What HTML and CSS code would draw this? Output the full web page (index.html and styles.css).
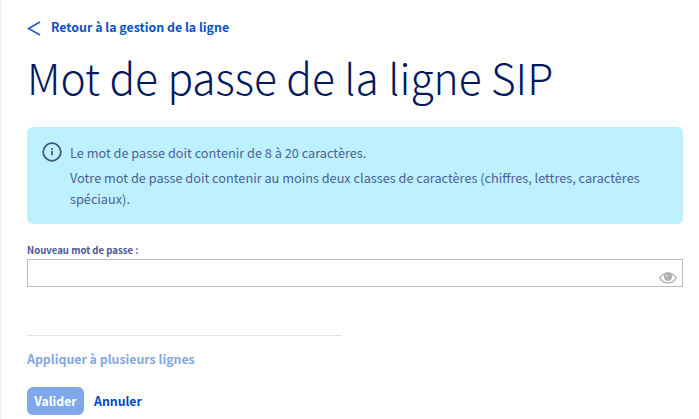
FILE: index.html
```html
<!DOCTYPE html>
<html lang="fr">
<head>
<meta charset="utf-8">
<title>Mot de passe de la ligne SIP</title>
<link rel="stylesheet" href="styles.css">
</head>
<body>
<main class="page">
  <a class="back" href="#">
    <svg class="back-icon" viewBox="0 0 14 15" aria-hidden="true"><path d="M13 1 1.5 7.5 13 14"/></svg>
    <span>Retour à la gestion de la ligne</span>
  </a>
  <h1 class="title"><span>Mot de passe de la ligne SIP</span></h1>
  <section class="notice">
    <svg class="notice-icon" viewBox="0 0 20 20" aria-hidden="true"><circle cx="10" cy="10" r="8.8"/><path d="M10 9v4.3M10 6.2v1.7"/></svg>
    <div class="notice-text">
      <p><span>Le mot de passe doit contenir de 8 à 20 caractères.</span></p>
      <p><span>Votre mot de passe doit contenir au moins deux classes de caractères (chiffres, lettres, caractères spéciaux).</span></p>
    </div>
  </section>
  <label class="label" for="password"><span>Nouveau mot de passe :</span></label>
  <div class="field">
    <input class="input" id="password" type="password">
    <svg class="eye" viewBox="0 0 18 12" aria-hidden="true"><path class="eye-line" d="M.8 6Q4 1 9 1t8.2 5Q14 11 9 11T.8 6Z"/><circle class="eye-ball" cx="9" cy="4.7" r="4.2"/><circle class="eye-glint" cx="7.8" cy="3.6" r="1.3"/></svg>
  </div>
  <hr class="rule">
  <a class="apply"><span>Appliquer à plusieurs lignes</span></a>
  <div class="actions">
    <button class="submit" disabled>Valider</button>
    <a class="cancel" href="#">Annuler</a>
  </div>
</main>
</body>
</html>
```
FILE: styles.css
```css
* { box-sizing: border-box; }
body {
  margin: 0;
  height: 419px;
  overflow: hidden;
  background: #fff;
  font-family: "Noto Sans CJK JP", "Noto Sans", sans-serif;
  font-size: 12.72px;
}
a { text-decoration: none; }
.page {
  height: 419px;
  padding: 17px 16px 0 25px;
  border-left: 2px solid #f2f2fc;
}
.back {
  display: flex;
  align-items: center;
  gap: 10px;
  height: 20px;
  color: #0b50c8;
  font-size: 12.38px;
  font-weight: 700;
  line-height: 20px;
}
.back-icon { width: 14px; height: 15px; margin-top: 3px; fill: none; stroke: #1c58c8; stroke-width: 1.6; }
.title {
  margin: 12px 0 0;
  height: 56px;
  color: #00185e;
  font-size: 42.5px;
  font-weight: 200;
  line-height: 56px;
  white-space: nowrap;
}
.notice {
  display: flex;
  gap: 8px;
  height: 97px;
  margin-top: 22px;
  padding: 15px 30px 0 15px;
  border-radius: 6px;
  background: #bef1ff;
  color: #4d5f95;
}
.notice-icon { flex: none; width: 20px; height: 20px; fill: none; stroke: #3f5383; stroke-width: 1.7; }
.notice p { margin: 0 0 4px; line-height: 21px; }
.label {
  display: block;
  margin-top: 18px;
  height: 17px;
  color: #4d5592;
  font-size: 9.6px;
  font-weight: 700;
  line-height: 17px;
}
.field { position: relative; height: 28px; }
.input {
  display: block;
  width: 100%;
  height: 28px;
  border: 1px solid #bcbcbc;
  background: #fff;
  outline: none;
}
.eye { position: absolute; right: 6px; bottom: 3px; width: 18px; height: 12px; }
.eye-line { fill: #fff; stroke: #b9b9b9; stroke-width: 1.4; }
.eye-ball { fill: #b0b0b0; }
.eye-glint { fill: #ccc; }
.rule { width: 315px; height: 1px; margin: 48px 0 0; border: 0; background: #e3e3e6; }
.apply {
  display: block;
  margin-top: 13px;
  color: #85a7e3;
  font-size: 12.35px;
  font-weight: 700;
  line-height: 20px;
}
.actions { display: flex; gap: 10px; margin-top: 18px; font-size: 12.3px; }
.submit, .cancel { height: 28px; font: inherit; font-weight: 700; line-height: 28px; }
.submit { width: 57px; padding: 0; border: 0; border-radius: 6px; background: #80a7e9; color: #fff; }
.cancel { color: #0048c4; }
```
